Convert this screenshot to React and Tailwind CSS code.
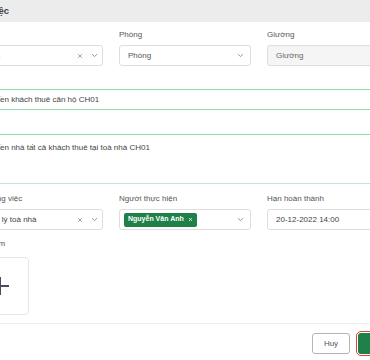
import React from "react";

const Chevron = () => (
  <svg width="7" height="5" viewBox="0 0 7 5" className="shrink-0">
    <path d="M1 1.2 L3.5 3.6 L6 1.2" fill="none" stroke="#8a8a8a" strokeWidth="0.9" />
  </svg>
);

const Cross = ({ color = "#9a9a9a", size = 6 }) => (
  <svg width={size} height={size} viewBox="0 0 6 6" className="shrink-0">
    <path d="M1.2 1.2 L4.8 4.8 M4.8 1.2 L1.2 4.8" stroke={color} strokeWidth="0.9" />
  </svg>
);

const Label = ({ children, className = "" }) => (
  <div className={`h-[10px] leading-[10px] text-[8px] text-[#555] whitespace-nowrap ${className}`}>{children}</div>
);

export default function App() {
  return (
    <div
      className="w-[370px] h-[360px] overflow-hidden bg-white relative"
      style={{ fontFamily: '"Liberation Sans", Arial, sans-serif' }}
    >
      <div className="-ml-[45px] w-[460px] flex flex-col">
        {/* Header */}
        <div className="h-[22px] bg-[#ececec] flex items-center">
          <div className="w-[54px] flex justify-end shrink-0">
            <span className="whitespace-nowrap shrink-0 text-[9.5px] font-semibold text-[#444]">Thêm công việc</span>
          </div>
        </div>

        {/* Body */}
        <div className="px-4 pt-[8px] pb-[8px] flex flex-col">
          {/* Row 1 */}
          <div className="grid grid-cols-3 gap-4">
            <div>
              <Label className="mb-[5px]">Căn hộ</Label>
              <div className="h-[21px] border border-[#dedede] rounded-[3px] flex items-center pl-[8px] pr-[4px] text-[8px] text-[#444]">
                <span className="flex-1 whitespace-nowrap">CH01</span>
                <Cross />
                <div className="w-[8px]" />
                <Chevron />
              </div>
            </div>
            <div>
              <Label className="mb-[5px]">Phòng</Label>
              <div className="h-[21px] border border-[#dedede] rounded-[3px] flex items-center pl-[8px] pr-[6px] text-[8px] text-[#555]">
                <span className="flex-1 whitespace-nowrap">Phòng</span>
                <Chevron />
              </div>
            </div>
            <div>
              <Label className="mb-[5px]">Giường</Label>
              <div className="h-[21px] border border-[#dedede] bg-[#f5f5f5] rounded-[3px] flex items-center pl-[8px] text-[8px] text-[#666]">
                <span className="whitespace-nowrap">Giường</span>
              </div>
            </div>
          </div>

          {/* Title */}
          <Label className="mt-[8px] mb-[5px]">Tiêu đề</Label>
          <div className="h-[21px] border border-[#8fdcab] rounded-[3px] flex items-center pl-[8px] text-[8px] text-[#444]">
            <span className="whitespace-nowrap">Thu tiền khách thuê căn hộ CH01</span>
          </div>

          {/* Content */}
          <Label className="mt-[8px] mb-[6px]">Mô tả</Label>
          <div className="h-[50px] border border-[#8fdcab] border-b-[#bfe9cf] rounded-[3px] pl-[8px] pt-[8px] text-[8px] leading-[10px] text-[#444]">
            <span className="whitespace-nowrap">Thu tiền nhà tất cả khách thuê tại toà nhà CH01</span>
          </div>

          {/* Row 3 */}
          <div className="grid grid-cols-3 gap-4 mt-[10px]">
            <div>
              <Label className="mb-[5px]">Loại công việc</Label>
              <div className="h-[21px] border border-[#dedede] rounded-[3px] flex items-center pl-[8px] pr-[4px] text-[8px] text-[#444]">
                <span className="flex-1 whitespace-nowrap">Quản lý toà nhà</span>
                <Cross />
                <div className="w-[8px]" />
                <Chevron />
              </div>
            </div>
            <div>
              <Label className="mb-[5px]">Người thực hiện</Label>
              <div className="h-[21px] border border-[#dedede] rounded-[3px] flex items-center pl-[4px] pr-[6px]">
                <div className="flex-1 flex">
                  <div className="h-[14px] bg-[#1f8048] rounded-[2px] flex items-center gap-[4px] pl-[4px] pr-[4px] text-[7px] font-bold text-white whitespace-nowrap">
                    <span>Nguyễn Văn Anh</span>
                    <Cross color="#ffffff" size={5} />
                  </div>
                </div>
                <Chevron />
              </div>
            </div>
            <div>
              <Label className="mb-[5px]">Hạn hoàn thành</Label>
              <div className="h-[21px] border border-[#dedede] rounded-[3px] flex items-center pl-[8px] text-[8px] text-[#444]">
                <span className="whitespace-nowrap">20-12-2022 14:00</span>
              </div>
            </div>
          </div>

          {/* Attachment */}
          <Label className="mt-[9px] mb-[8px]">Đính kèm</Label>
          <div className="w-[58px] h-[58px] border border-[#e6e6e6] rounded-[4px] flex items-center justify-center">
            <svg width="20" height="20" viewBox="0 0 20 20">
              <path d="M10 1 V19 M1 10 H19" stroke="#4a4a68" strokeWidth="2" />
            </svg>
          </div>
        </div>

        {/* Footer */}
        <div className="border-t border-[#eeeeee] px-4 pt-[9px] flex justify-end gap-[8px]">
          <button className="w-[38px] h-[21px] border border-[#b5b5b5] rounded-[3px] text-[8px] text-[#555] bg-white flex items-center justify-center">
            Huỷ
          </button>
          <button className="w-[41px] h-[21px] rounded-[3px] bg-[#1f8048] text-[8px] text-white outline outline-1 outline-offset-1 outline-[#e0413a] flex items-center justify-center">
            Lưu
          </button>
        </div>
      </div>
    </div>
  );
}
